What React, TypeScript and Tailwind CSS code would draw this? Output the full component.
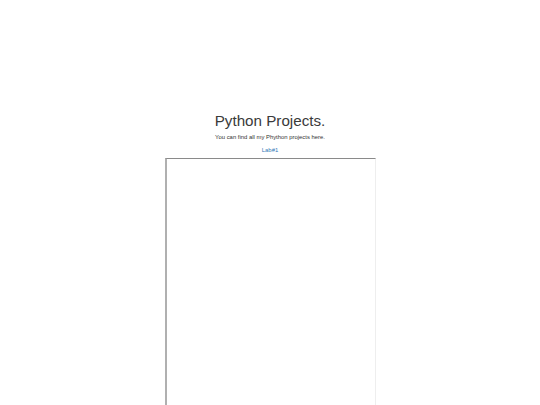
export default function App() {
  return (
    <div className="w-[540px] h-[405px] overflow-hidden bg-white" style={{ fontFamily: '"Liberation Sans", Arial, sans-serif' }}>
      <div className="flex flex-col items-center pt-[112px]">
        <h1 className="text-[15.2px] leading-[18px] text-[#3a3a3a] font-normal">Python Projects.</h1>
        <p className="mt-[3px] text-[5.9px] leading-[8px] text-[#333333]">You can find all my Phython projects here.</p>
        <a href="#" className="mt-[5px] text-[5.9px] leading-[8px] text-[#337ab7]">Lab#1</a>
        <div className="mt-[4px] ml-[1px] w-[211px] h-[260px] border-l-2 border-t border-r border-l-[#b0b0b0] border-t-[#8a8a8a] border-r-[#eeeeee] bg-white" />
      </div>
    </div>
  );
}
